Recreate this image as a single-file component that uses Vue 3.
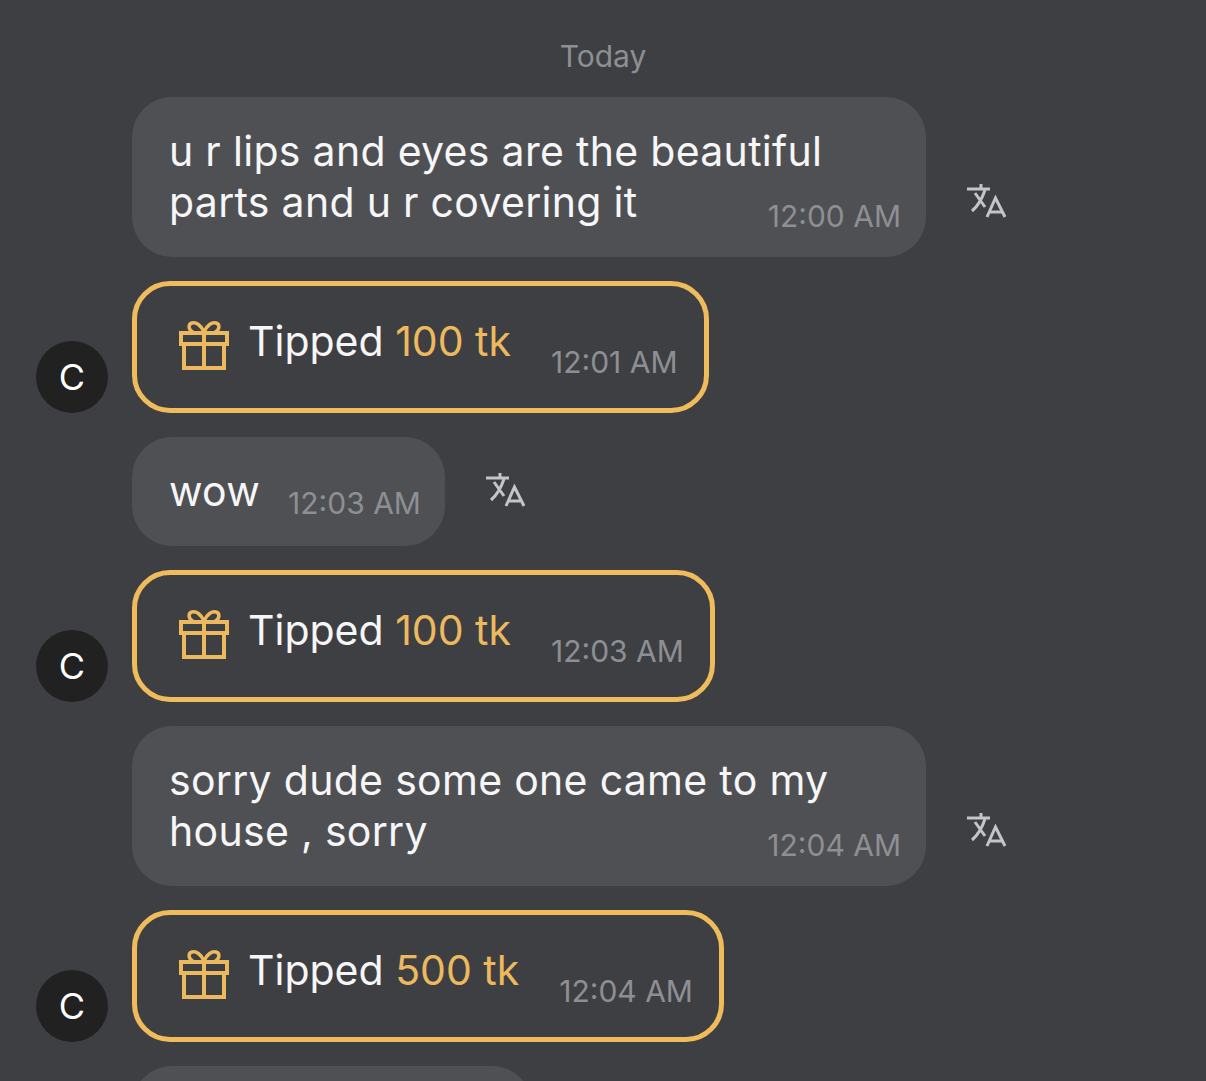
<script setup>
const messages = [
  { id: 1, type: 'text', wide: true, text: 'u r lips and eyes are the beautiful parts and u r covering it', time: '12:00 AM' },
  { id: 2, type: 'tip', amount: '100 tk', time: '12:01 AM' },
  { id: 3, type: 'text', text: 'wow', time: '12:03 AM' },
  { id: 4, type: 'tip', amount: '100 tk', time: '12:03 AM' },
  { id: 5, type: 'text', wide: true, text: 'sorry dude some one came to my house , sorry', time: '12:04 AM' },
  { id: 6, type: 'tip', amount: '500 tk', time: '12:04 AM' }
]
</script>

<template>
  <div class="chat">
    <div class="day">Today</div>

    <div v-for="msg in messages" :key="msg.id" class="row">
      <div class="avatar-slot">
        <div v-if="msg.type === 'tip'" class="avatar">C</div>
      </div>

      <!-- Tip -->
      <div v-if="msg.type === 'tip'" class="tip">
        <svg class="gift" viewBox="0 0 50 50" fill="none" stroke="currentColor" stroke-width="4">
          <rect x="2" y="13" width="46" height="11" />
          <path d="M5 24V48H45V24" />
          <path d="M25 12V48" />
          <path d="M25 12C22 5 17 2 13 3C9 4 9 10 14 12" stroke-width="3.5" />
          <path d="M25 12C28 5 33 2 37 3C41 4 41 10 36 12" stroke-width="3.5" />
        </svg>
        <span class="tip-text">Tipped <span class="amount">{{ msg.amount }}</span></span>
        <span class="time tip-time">{{ msg.time }}</span>
      </div>

      <!-- Text -->
      <template v-else>
        <div class="bubble" :class="{ wide: msg.wide }">
          <span class="body">{{ msg.text }}</span>
          <span class="time">{{ msg.time }}</span>
        </div>
        <svg class="translate" viewBox="0 0 40 36" fill="none" stroke="currentColor" stroke-width="3">
          <path d="M0 6H23" />
          <path d="M14 1V6" />
          <path d="M8 10L18 24" />
          <path d="M18 7C15 16 11 23 5 28" />
          <path d="M20 34L28.500 15L38 34" />
          <path d="M22.500 29H35.500" />
        </svg>
      </template>
    </div>

    <div class="row">
      <div class="avatar-slot"></div>
      <div class="bubble cut"></div>
    </div>
  </div>
</template>

<style>
html,
body {
  margin: 0;
  background: #3e3f43;
  overflow: hidden;
}
</style>

<style scoped>
.chat {
  height: 1081px;
  overflow: hidden;
  box-sizing: border-box;
  padding: 36px 0 0 36px;
  background: #3e3f43;
  display: flex;
  flex-direction: column;
  gap: 24px;
  font-family: Inter, "Liberation Sans", sans-serif;
  color: #f6f6f6;
}

.day {
  height: 37px;
  margin-bottom: 0;
  margin-left: -36px;
  text-align: center;
  font-size: 30px;
  line-height: 40px;
  color: #8e8f93;
}

.row {
  display: flex;
  align-items: flex-end;
  flex-shrink: 0;
}

.avatar-slot {
  width: 72px;
  margin-right: 24px;
  flex-shrink: 0;
}

.avatar {
  width: 72px;
  height: 72px;
  border-radius: 50%;
  background: #212121;
  color: #fff;
  font-size: 36px;
  display: flex;
  align-items: center;
  justify-content: center;
}

/* bubbles */
.bubble {
  display: flex;
  align-items: flex-end;
  gap: 28px;
  box-sizing: border-box;
  padding: 29px 24px 29px 37px;
  border-radius: 40px;
  background: #4f5054;
  font-size: 41px;
  line-height: 51px;
}

.bubble.wide {
  display: grid;
  width: 794px;
  padding-right: 25px;
}

.bubble.wide > * {
  grid-area: 1 / 1;
}

.bubble.wide .time {
  justify-self: end;
  margin-bottom: -8px;
}

.bubble.cut {
  width: 400px;
  height: 110px;
}

.body {
  letter-spacing: 0.3px;
}

.time {
  font-size: 30px;
  line-height: 40px;
  color: #8e8f93;
  margin-bottom: -6px;
  white-space: nowrap;
}

.translate {
  width: 40px;
  height: 36px;
  margin-left: 41px;
  margin-bottom: 38px;
  color: #c4c5c8;
}

/* tips */
.tip {
  display: flex;
  align-items: center;
  height: 132px;
  box-sizing: border-box;
  padding: 0 26px 0 42px;
  border: 5px solid #f0bb5a;
  border-radius: 38px;
}

.gift {
  width: 50px;
  height: 50px;
  color: #edb95e;
  margin-right: 19px;
  margin-top: -4px;
}

.tip-text {
  font-size: 41px;
  margin-top: -12px;
}

.amount {
  color: #edb95e;
}

.tip-time {
  margin: 30px 0 0 40px;
}
</style>
